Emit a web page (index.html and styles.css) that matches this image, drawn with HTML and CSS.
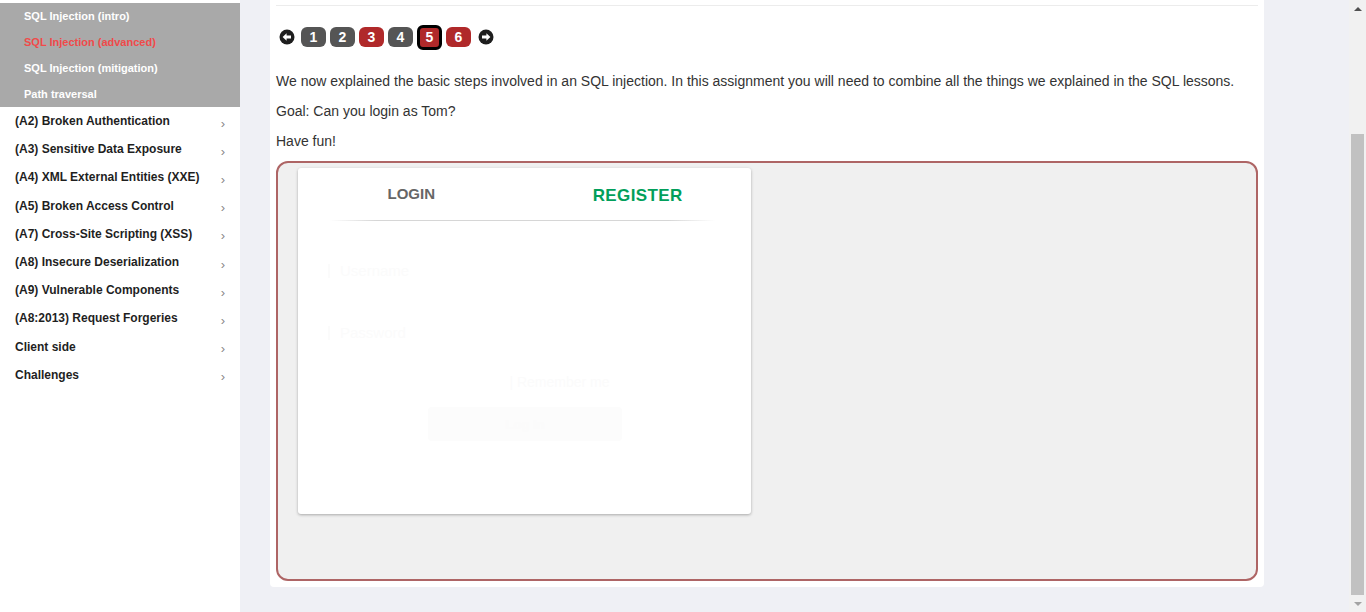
FILE: index.html
```html
<!DOCTYPE html>
<html>
<head>
<meta charset="utf-8">
<link rel="stylesheet" href="styles.css">
</head>
<body>
<div class="page">
  <aside class="sidebar">
    <ul class="submenu">
      <li>SQL Injection (intro)</li>
      <li class="active">SQL Injection (advanced)</li>
      <li>SQL Injection (mitigation)</li>
      <li>Path traversal</li>
    </ul>
    <ul class="menu">
      <li><span>(A2) Broken Authentication</span><i>›</i></li>
      <li><span>(A3) Sensitive Data Exposure</span><i>›</i></li>
      <li><span>(A4) XML External Entities (XXE)</span><i>›</i></li>
      <li><span>(A5) Broken Access Control</span><i>›</i></li>
      <li><span>(A7) Cross-Site Scripting (XSS)</span><i>›</i></li>
      <li><span>(A8) Insecure Deserialization</span><i>›</i></li>
      <li><span>(A9) Vulnerable Components</span><i>›</i></li>
      <li><span>(A8:2013) Request Forgeries</span><i>›</i></li>
      <li><span>Client side</span><i>›</i></li>
      <li><span>Challenges</span><i>›</i></li>
    </ul>
  </aside>
  <main class="main">
    <section class="lesson">
      <div class="rule"></div>
      <nav class="pager">
        <svg class="arrow prev" width="16" height="16" viewBox="0 0 16 16"><circle cx="8" cy="8" r="7.5" fill="#1e1e1e"/><path d="M3.6 8 L7.6 4.2 L7.6 6.6 L12 6.6 L12 9.4 L7.6 9.4 L7.6 11.8 Z" fill="#fff"/></svg>
        <span class="pg gray">1</span>
        <span class="pg gray">2</span>
        <span class="pg red">3</span>
        <span class="pg gray">4</span>
        <span class="pg red current">5</span>
        <span class="pg red">6</span>
        <svg class="arrow next" width="16" height="16" viewBox="0 0 16 16"><circle cx="8" cy="8" r="7.5" fill="#1e1e1e"/><path d="M12.4 8 L8.4 4.2 L8.4 6.6 L4 6.6 L4 9.4 L8.4 9.4 L8.4 11.8 Z" fill="#fff"/></svg>
      </nav>
      <p>We now explained the basic steps involved in an SQL injection. In this assignment you will need to combine all the things we explained in the SQL lessons.</p>
      <p>Goal: Can you login as Tom?</p>
      <p>Have fun!</p>
      <div class="attack">
        <div class="panel">
          <div class="tabs">
            <div class="tab login">LOGIN</div>
            <div class="tab register">REGISTER</div>
          </div>
          <div class="divider"></div>
          <form class="form">
            <div class="field"><span class="bar"></span>Username</div>
            <div class="field"><span class="bar"></span>Password</div>
            <div class="remember">| Remember me</div>
            <div class="btn">Log In</div>
          </form>
        </div>
      </div>
    </section>
  </main>
  <div class="scrollbar">
    <div class="sb-btn"><span class="up"></span></div>
    <div class="sb-track"><div class="sb-thumb"></div></div>
    <div class="sb-btn"><span class="down"></span></div>
  </div>
</div>
</body>
</html>
```
FILE: styles.css
```css
* { box-sizing: border-box; }
html, body { margin: 0; padding: 0; height: 612px; overflow: hidden; }
body { font-family: "Liberation Sans", Arial, sans-serif; background: #eff0f5; color: #333; }

.page { display: flex; height: 612px; }

.sidebar { width: 240px; flex: none; background: #fff; padding-top: 3px; }
.submenu { list-style: none; margin: 0; padding: 0; background: #a9a9a9; }
.submenu li { height: 26px; line-height: 26px; padding-left: 24px; font-size: 11px; font-weight: bold; color: #fff; }
.submenu li.active { color: #f04a4a; }
.menu { list-style: none; margin: 0; padding: 0; }
.menu li { height: 28.2px; display: flex; align-items: center; justify-content: space-between; padding: 0 15px 0 15px; font-size: 12px; font-weight: bold; color: #1f1f1f; }
.menu li i { font-style: normal; font-weight: normal; color: #8a8a8a; font-size: 13px; padding-top: 4px; }

.main { flex: 1; padding-left: 30px; padding-right: 85px; }
.lesson { background: #fff; height: 587px; padding: 5px 6px 0 6px; border-radius: 0 0 4px 4px; }
.rule { height: 1px; background: #ececec; }

.pager { display: flex; align-items: center; height: 24px; margin-top: 19px; padding-left: 3px; }
.arrow { display: block; }
.arrow.prev { margin-right: 6px; }
.arrow.next { margin-left: 3px; }
.pg { width: 25px; height: 20px; border-radius: 6px; color: #fff; font-size: 14px; font-weight: bold; display: flex; align-items: center; justify-content: center; margin-right: 4px; }
.pg.gray { background: #555; }
.pg.red { background: #b0292a; }
.pg.current { height: 25px; border: 3px solid #000; }

p { font-size: 14px; line-height: 20px; margin: 0 0 10px 0; }
.pager + p { margin-top: 22px; }

.attack { height: 420px; border: 2px solid #ae6565; border-radius: 12px; background: #f0f0f0; padding: 5px 20px; }
.panel { width: 453px; height: 346px; background: #fff; border-radius: 3px; box-shadow: 0 1px 3px rgba(0,0,0,0.3); padding-top: 14px; }
.tabs { display: flex; align-items: flex-start; }
.tab { flex: 1; text-align: center; font-weight: bold; padding-top: 3px; }
.tab.login { font-size: 15px; color: #666; }
.tab.register { font-size: 17px; color: #029f5b; letter-spacing: 0.4px; padding-top: 4px; }
.divider { height: 1px; margin: 14px 36px 0 32px; background: linear-gradient(to right, rgba(214,214,214,0), #d6d6d6 12%, #d6d6d6 88%, rgba(214,214,214,0)); }

.form { padding: 41px 30px 0 30px; color: #fbfbfb; }
.field { font-size: 15px; height: 62px; display: flex; align-items: flex-start; gap: 10px; }
.bar { width: 2px; height: 14px; background: #fbfbfb; margin-top: 2px; }
.remember { font-size: 14px; text-align: center; margin-top: -12px; padding-left: 70px; }
.btn { width: 194px; height: 34px; margin: 17px 0 0 100px; background: #fcfcfc; border-radius: 4px; font-size: 13px; font-weight: bold; display: flex; align-items: center; justify-content: center; }

.scrollbar { width: 17px; flex: none; background: #f1f1f1; display: flex; flex-direction: column; }
.sb-btn { height: 17px; display: flex; align-items: center; justify-content: center; }
.sb-track { flex: 1; padding: 117px 2px 0 2px; }
.sb-thumb { height: 100%; background: #c1c1c1; }
.up { width: 0; height: 0; border-left: 4px solid transparent; border-right: 4px solid transparent; border-bottom: 4px solid #505050; }
.down { width: 0; height: 0; border-left: 4px solid transparent; border-right: 4px solid transparent; border-top: 4px solid #a3a3a3; }
```
